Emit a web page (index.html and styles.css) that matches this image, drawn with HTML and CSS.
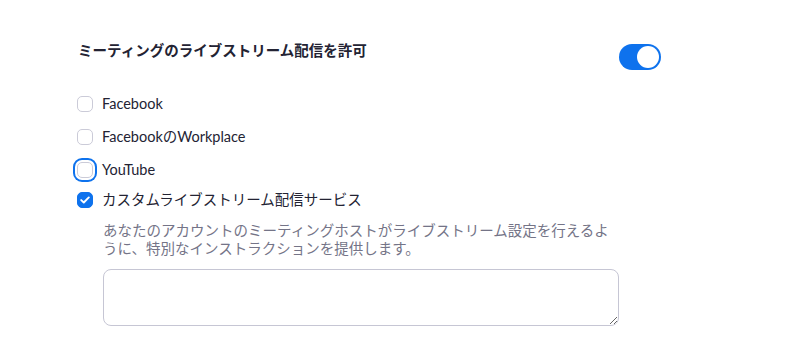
FILE: index.html
```html
<!doctype html>
<html>
<head>
<meta charset="utf-8">
<title>ライブストリーム設定</title>
<link rel="stylesheet" href="styles.css">
</head>
<body>
<div class="setting">
	<div class="setting-head">
		<h3 class="setting-title">ミーティングのライブストリーム配信を許可</h3>
		<span class="toggle on"><span class="knob"></span></span>
	</div>
	<ul class="options">
		<li class="option"><span class="cb"></span><span class="label">Facebook</span></li>
		<li class="option"><span class="cb"></span><span class="label">FacebookのWorkplace</span></li>
		<li class="option"><span class="cb focus"></span><span class="label">YouTube</span></li>
		<li class="option custom">
			<span class="cb checked">
				<svg width="10" height="8" viewBox="0 0 10 8"><path d="M1.2 4.1 3.8 6.5 8.8 1.4" fill="none" stroke="#fff" stroke-width="1.9" stroke-linecap="round" stroke-linejoin="round"/></svg>
			</span>
			<span class="label">カスタムライブストリーム配信サービス</span>
		</li>
	</ul>
	<div class="custom-body">
		<p class="desc">あなたのアカウントのミーティングホストがライブストリーム設定を行えるように、特別なインストラクションを提供します。</p>
		<textarea class="instructions"></textarea>
	</div>
</div>
</body>
</html>
```

FILE: styles.css
```css
*{margin:0;padding:0;box-sizing:border-box}
body{background:#fff;font-family:Lato,"Noto Sans CJK JP",sans-serif;color:#232333}
.setting{width:661px;padding:41px 0 0 78px}
.setting-head{display:flex;justify-content:space-between;align-items:flex-start}
.setting-title{font-size:14.5px;font-weight:700;line-height:20px;color:#232333}
.toggle{display:flex;align-items:center;justify-content:flex-end;width:42px;height:26px;margin-top:3px;padding:2px;border-radius:13px;background:#0e72ed}
.toggle .knob{width:22px;height:22px;border-radius:50%;background:#fff}
.options{list-style:none;margin-top:19px}
.option{display:flex;align-items:center;height:30px;font-size:14.5px}
.option+.option{margin-top:3px}
.option.custom{margin-top:0}
.cb{display:flex;align-items:center;justify-content:center;width:16px;height:16px;margin-left:-1px;margin-right:9px;border:1px solid #cbcbd8;border-radius:5px;background:#fff}
.cb.focus{box-shadow:0 0 0 2px #fff,0 0 0 4px #0e72ed}
.cb.checked{border-color:#0e72ed;background:#0e72ed}
.label{line-height:18px;color:#232333}
.custom-body{padding-left:25px}
.desc{width:512px;margin-top:7px;font-size:14.5px;line-height:18px;color:#747487}
.instructions{display:block;width:516px;height:57px;margin-top:11px;border:1px solid #c6c6d4;border-radius:8px;font-family:inherit;font-size:14px;outline:none}
```
